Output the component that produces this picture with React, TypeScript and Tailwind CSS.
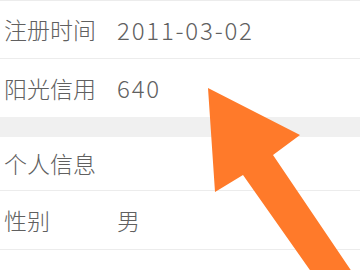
export default function App() {
  const font = { fontFamily: '"Noto Sans CJK SC", "Noto Sans", sans-serif' };
  return (
    <div
      className="relative w-[360px] h-[270px] overflow-hidden bg-white text-[23px] font-light text-[#606060]"
      style={font}
    >
      <div className="border-t border-[#ececec]">
        <div className="h-[58px] flex items-center border-b border-[#ececec] pl-[4px]">
          <span className="w-[113px]">注册时间</span>
          <span className="text-[24px] tracking-[1.8px]">2011-03-02</span>
        </div>
        <div className="h-[58px] flex items-center pl-[4px]">
          <span className="w-[113px]">阳光信用</span>
          <span className="text-[24px] tracking-[1.8px]">640</span>
        </div>
        <div className="h-[20px] bg-[#f0f0f0]" />
        <div className="h-[54px] flex items-center border-b border-[#ececec] pl-[4px]">
          <span>个人信息</span>
        </div>
        <div className="h-[59px] flex items-center border-b border-[#ececec] pl-[4px]">
          <span className="w-[113px]">性别</span>
          <span>男</span>
        </div>
        <div className="h-[58px] flex items-center pl-[4px] pt-[10px]">
          <span className="w-[113px]">所在地区</span>
          <span>北京</span>
        </div>
      </div>
      <svg
        className="absolute left-0 top-0"
        width="360"
        height="270"
        viewBox="0 0 360 270"
      >
        <polygon
          points="208,88 300,135 273,155 371,300 331,300 243,175 215,192"
          fill="#ff7a2a"
        />
      </svg>
    </div>
  );
}
